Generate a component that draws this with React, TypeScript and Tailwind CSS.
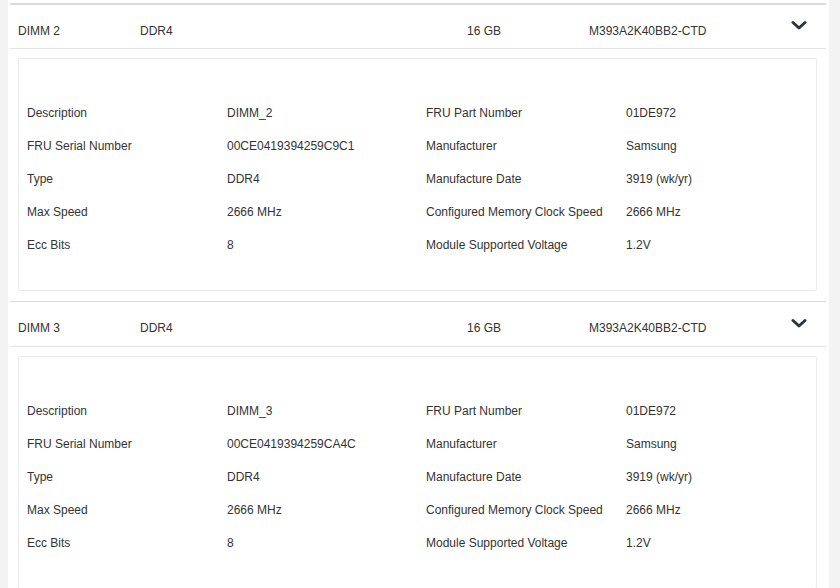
import { useState } from 'react';

type Dimm = {
  slot: string;
  type: string;
  size: string;
  part: string;
  left: [string, string][];
  right: [string, string][];
};

const dimms: Dimm[] = [
  {
    slot: 'DIMM 2',
    type: 'DDR4',
    size: '16 GB',
    part: 'M393A2K40BB2-CTD',
    left: [
      ['Description', 'DIMM_2'],
      ['FRU Serial Number', '00CE0419394259C9C1'],
      ['Type', 'DDR4'],
      ['Max Speed', '2666 MHz'],
      ['Ecc Bits', '8'],
    ],
    right: [
      ['FRU Part Number', '01DE972'],
      ['Manufacturer', 'Samsung'],
      ['Manufacture Date', '3919 (wk/yr)'],
      ['Configured Memory Clock Speed', '2666 MHz'],
      ['Module Supported Voltage', '1.2V'],
    ],
  },
  {
    slot: 'DIMM 3',
    type: 'DDR4',
    size: '16 GB',
    part: 'M393A2K40BB2-CTD',
    left: [
      ['Description', 'DIMM_3'],
      ['FRU Serial Number', '00CE0419394259CA4C'],
      ['Type', 'DDR4'],
      ['Max Speed', '2666 MHz'],
      ['Ecc Bits', '8'],
    ],
    right: [
      ['FRU Part Number', '01DE972'],
      ['Manufacturer', 'Samsung'],
      ['Manufacture Date', '3919 (wk/yr)'],
      ['Configured Memory Clock Speed', '2666 MHz'],
      ['Module Supported Voltage', '1.2V'],
    ],
  },
];

function Chevron() {
  return (
    <svg width="16" height="11" viewBox="0 0 16 11" fill="none">
      <path d="M2 2.5 L8 8 L14 2.5" stroke="#2f3540" strokeWidth="3" strokeLinecap="round" strokeLinejoin="round" />
    </svg>
  );
}

function DimmRow({ d, first }: { d: Dimm; first: boolean }) {
  const [open, setOpen] = useState(true);
  const rows = d.left.map((l, i) => [l, d.right[i]]);
  return (
    <div className={first ? 'border-t-2 border-[#dcdcdc]' : 'border-t border-[#dcdcdc] mt-[10px]'}>
      <div
        className={`flex items-center pt-[8px] border-b border-[#e3e3e3] pl-[8px] pr-[19px] ${
          first ? 'h-[44px]' : 'h-[45px]'
        }`}
      >
        <div className="w-[122px]">{d.slot}</div>
        <div className="w-[327px]">{d.type}</div>
        <div className="w-[122px]">{d.size}</div>
        <div className="flex-1">{d.part}</div>
        <button onClick={() => setOpen(!open)} className="mt-[-10px]">
          <Chevron />
        </button>
      </div>
      {open && (
        <div className="mt-[9px] ml-[8px] mr-[9px] border border-[#ececec] rounded-[2px] pt-[37px] pb-[29px] px-[8px]">
          {rows.map(([[k1, v1], [k2, v2]]) => (
            <div key={k1} className="grid grid-cols-[200px_199px_200px_1fr] h-[33px] items-center">
              <div>{k1}</div>
              <div>{v1}</div>
              <div>{k2}</div>
              <div>{v2}</div>
            </div>
          ))}
        </div>
      )}
    </div>
  );
}

export default function App() {
  return (
    <div
      className="flex h-[588px] overflow-hidden bg-[#f3f3f3] text-[12px] text-[#333]"
      style={{ fontFamily: '"Liberation Sans", Arial, sans-serif' }}
    >
      <div className="ml-[8px] w-[821px] bg-white pt-[3px] pl-[2px] pr-[3px]">
        {dimms.map((d, i) => (
          <DimmRow key={d.slot} d={d} first={i === 0} />
        ))}
      </div>
    </div>
  );
}
